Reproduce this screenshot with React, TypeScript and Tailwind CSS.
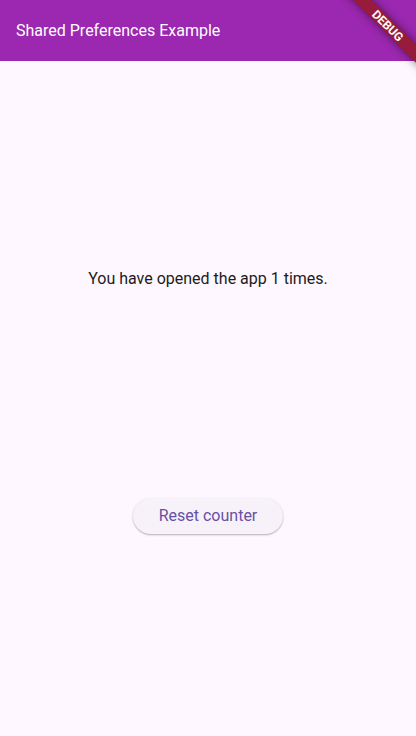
import React from "react";

function DebugBanner() {
  return (
    <div className="pointer-events-none absolute right-0 top-0 h-20 w-20 overflow-hidden" aria-hidden="true">
      <div className="absolute -right-7 top-[19px] flex h-[13px] w-28 rotate-45 items-center justify-center bg-[#971b3a] text-xs font-bold leading-none text-white shadow-[0_0_8px_rgba(0,0,0,0.5)]">
        DEBUG
      </div>
    </div>
  );
}

export default function App() {
  return (
    <div className="relative flex min-h-screen flex-col bg-[#fef7ff] font-['Roboto',sans-serif]">
      <header className="flex h-[61px] items-center bg-[#9c27b0] px-4">
        <h1 className="text-base font-normal text-white">Shared Preferences Example</h1>
      </header>
      <main className="flex flex-1 flex-col items-center justify-evenly gap-1 pt-1">
        <p className="text-base text-[#1d1b20]">You have opened the app 1 times.</p>
        <button
          type="button"
          className="h-9 rounded-full bg-[#f7f2fa] px-[26px] text-base text-[#6750a4] shadow-[0_1px_2px_rgba(0,0,0,0.3)]"
        >
          Reset counter
        </button>
      </main>
      <DebugBanner />
    </div>
  );
}
